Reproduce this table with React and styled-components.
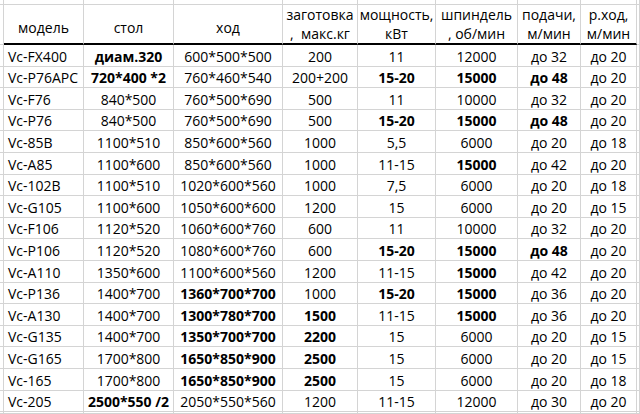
import React from 'react';
import styled, { createGlobalStyle } from 'styled-components';

const GlobalStyle = createGlobalStyle`
  html, body {
    margin: 0;
    padding: 0;
    background: #fff;
  }
`;

const GRID = '#d4d4d4';

const Sheet = styled.div`
  display: grid;
  grid-template-columns: 4px 80px 90px 109px 75px 78px 82px 63px 56px 1fr;
  grid-template-rows: 5px 40px repeat(17, 21.6px) 1fr;
  width: 640px;
  height: 414px;
  overflow: hidden;
  background: #fff;
  font-family: 'Open Sans', 'Liberation Sans', sans-serif;
  font-size: 14px;
  color: #000;
`;

const Cell = styled.div`
  box-sizing: border-box;
  display: flex;
  align-items: flex-end;
  justify-content: ${(p) => (p.$left ? 'flex-start' : 'center')};
  padding: 3px 0 0 ${(p) => (p.$left ? '4px' : '0')};
  line-height: 18px;
  white-space: nowrap;
  overflow: hidden;
  font-weight: ${(p) => (p.$bold ? 700 : 400)};
  border-right: 1px solid ${GRID};
  border-bottom: 1px solid ${GRID};
`;

const Filler = styled.div`
  box-sizing: border-box;
  border-right: 1px solid ${GRID};
  border-bottom: 1px solid ${GRID};
`;

const HeadCell = styled.div`
  box-sizing: border-box;
  display: flex;
  flex-direction: column;
  align-items: center;
  justify-content: center;
  padding-top: ${(p) => (p.$single ? '6px' : '0')};
  line-height: 19px;
  white-space: pre;
  border-right: 1px solid ${GRID};
  border-bottom: 2px solid #000;
`;

const headers = [
  ['модель'],
  ['стол'],
  ['ход'],
  ['заготовка', ',  макс.кг'],
  ['мощность,', 'кВт'],
  ['шпиндель', ', об/мин'],
  ['подачи,', 'м/мин'],
  ['р.ход,', 'м/мин'],
];

// "!" marks a bold value
const rows = [
  ['Vc-FX400', '!диам.320', '600*500*500', '200', '11', '12000', 'до 32', 'до 20'],
  ['Vc-P76APC', '!720*400 *2', '760*460*540', '200+200', '!15-20', '!15000', '!до 48', 'до 20'],
  ['Vc-F76', '840*500', '760*500*690', '500', '11', '10000', 'до 32', 'до 20'],
  ['Vc-P76', '840*500', '760*500*690', '500', '!15-20', '!15000', '!до 48', 'до 20'],
  ['Vc-85B', '1100*510', '850*600*560', '1000', '5,5', '6000', 'до 20', 'до 18'],
  ['Vc-A85', '1100*600', '850*600*560', '1000', '11-15', '!15000', 'до 42', 'до 20'],
  ['Vc-102B', '1100*510', '1020*600*560', '1000', '7,5', '6000', 'до 20', 'до 18'],
  ['Vc-G105', '1100*600', '1050*600*600', '1200', '15', '6000', 'до 20', 'до 15'],
  ['Vc-F106', '1120*520', '1060*600*760', '600', '11', '10000', 'до 32', 'до 20'],
  ['Vc-P106', '1120*520', '1080*600*760', '600', '!15-20', '!15000', '!до 48', 'до 20'],
  ['Vc-A110', '1350*600', '1100*600*560', '1200', '11-15', '!15000', 'до 42', 'до 20'],
  ['Vc-P136', '1400*700', '!1360*700*700', '1000', '!15-20', '!15000', 'до 36', 'до 20'],
  ['Vc-A130', '1400*700', '!1300*780*700', '!1500', '11-15', '!15000', 'до 36', 'до 20'],
  ['Vc-G135', '1400*700', '!1350*700*700', '!2200', '15', '6000', 'до 20', 'до 15'],
  ['Vc-G165', '1700*800', '!1650*850*900', '!2500', '15', '6000', 'до 20', 'до 15'],
  ['Vc-165', '1700*800', '!1650*850*900', '!2500', '15', '6000', 'до 20', 'до 18'],
  ['Vc-205', '!2500*550 /2', '2050*550*560', '1200', '11-15', '12000', 'до 30', 'до 20'],
];

const blankRow = (key) =>
  Array.from({ length: 10 }, (_, i) => <Filler key={`${key}-${i}`} />);

const App = () => (
  <>
    <GlobalStyle />
    <Sheet>
      {blankRow('top')}

      <Filler />
      {headers.map((lines, i) => (
        <HeadCell key={i} $single={lines.length === 1}>
          {lines.map((l) => (
            <span key={l}>{l}</span>
          ))}
        </HeadCell>
      ))}
      <Filler />

      {rows.map((row, r) => (
        <React.Fragment key={r}>
          <Filler />
          {row.map((v, c) => {
            const bold = v.startsWith('!');
            return (
              <Cell key={c} $left={c === 0} $bold={bold}>
                {bold ? v.slice(1) : v}
              </Cell>
            );
          })}
          <Filler />
        </React.Fragment>
      ))}

      {blankRow('bottom')}
    </Sheet>
  </>
);

export default App;
